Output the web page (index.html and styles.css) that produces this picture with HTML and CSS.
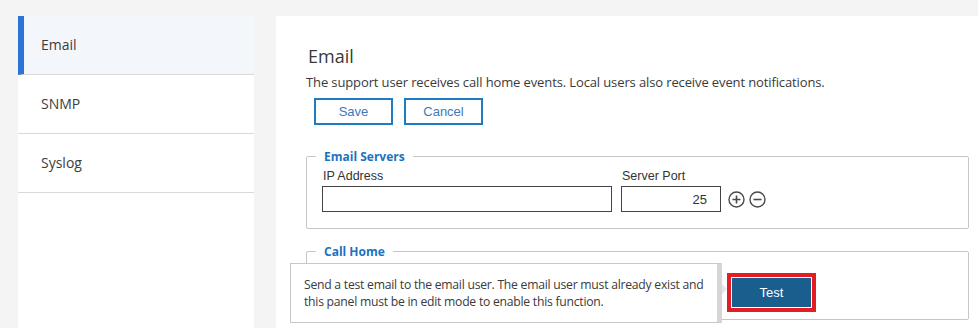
FILE: index.html
```html
<!DOCTYPE html>
<html lang="en">
<head>
  <meta charset="UTF-8">
  <title>Notifications - Email</title>
  <link rel="stylesheet" href="styles.css">
</head>
<body>
  <div class="page">
    <ul class="sidebar">
      <li class="nav-item active">Email</li>
      <li class="nav-item">SNMP</li>
      <li class="nav-item">Syslog</li>
    </ul>

    <div class="main">
      <h2>Email</h2>
      <p class="desc">The support user receives call home events. Local users also receive event notifications.</p>
      <div class="actions">
        <button class="btn-outline">Save</button>
        <button class="btn-outline">Cancel</button>
      </div>

      <fieldset class="group servers">
        <legend>Email Servers</legend>
        <div class="server-row">
          <label class="field ip">
            <span>IP Address</span>
            <input type="text" value="">
          </label>
          <label class="field port">
            <span>Server Port</span>
            <input type="text" value="25">
          </label>
          <div class="row-icons">
            <svg width="17" height="17" viewBox="0 0 17 17">
              <circle cx="8.5" cy="8.5" r="7.5" fill="none" stroke="#4a4a4a" stroke-width="1.4"/>
              <path d="M8.5 4.5v8M4.5 8.5h8" stroke="#4a4a4a" stroke-width="1.6"/>
            </svg>
            <svg width="17" height="17" viewBox="0 0 17 17">
              <circle cx="8.5" cy="8.5" r="7.5" fill="none" stroke="#4a4a4a" stroke-width="1.4"/>
              <path d="M4.5 8.5h8" stroke="#4a4a4a" stroke-width="1.6"/>
            </svg>
          </div>
        </div>
      </fieldset>

      <fieldset class="group call-home">
        <legend>Call Home</legend>
        <div class="call-row">
          <div class="test-wrap">
            <div class="tooltip">Send a test email to the email user. The email user must already exist and this panel must be in edit mode to enable this function.</div>
            <button class="btn-test">Test</button>
          </div>
        </div>
      </fieldset>
    </div>
  </div>
</body>
</html>
```

FILE: styles.css
```css
body {
  margin: 0;
  background-color: #f4f4f4;
  font-family: "Open Sans", "Noto Sans", sans-serif;
  color: #333;
  height: 328px;
  overflow: hidden;
}
.page {
  display: flex;
  gap: 22px;
  padding: 16px 0 0 18px;
  height: 312px;
}

/* left nav */
.sidebar {
  list-style: none;
  margin: 0;
  padding: 0;
  width: 236px;
  flex: none;
  background: white;
}
.nav-item {
  height: 58px;
  line-height: 58px;
  padding-left: 23px;
  font-size: 14px;
  color: #3d3d3d;
  border-bottom: 1px solid #d9d9d9;
}
.nav-item.active {
  background: #f3f6fb;
  border-left: 6px solid #2c73d8;
  padding-left: 17px;
}

/* main panel */
.main {
  flex: 1;
  background: white;
  padding: 28px 9px 0 30px;
}
h2 {
  margin: 0 0 0 2px;
  font-size: 18px;
  font-weight: 400;
  line-height: 24px;
  color: #3a3a3a;
}
.desc {
  margin: 5px 0 0;
  font-size: 13px;
  letter-spacing: -0.12px;
  line-height: 18px;
  color: #3a3a3a;
}
.actions {
  display: flex;
  gap: 11px;
  margin: 7px 0 0 8px;
}
.btn-outline {
  width: 79px;
  height: 27px;
  background: white;
  border: 2px solid #1f7bc2;
  font-family: "Liberation Sans", Arial, sans-serif;
  font-size: 13px;
  color: #3f78b8;
  padding: 0;
}

.group {
  margin: 0;
  border: 1px solid #c6c6c6;
  border-radius: 2px;
  padding: 0 15px;
}
.group legend {
  padding: 0 8px;
  margin-left: -6px;
  font-size: 12px;
  font-weight: 700;
  color: #1d72bd;
}
.servers {
  margin-top: 23px;
  height: 75px;
  padding-top: 4px;
}
.server-row {
  display: flex;
  align-items: flex-end;
  gap: 9px;
}
.field {
  display: flex;
  flex-direction: column;
  gap: 3px;
  font-family: "Liberation Sans", Arial, sans-serif;
  font-size: 12.5px;
  color: #333;
}
.field span {
  padding-left: 1px;
}
.field input {
  box-sizing: border-box;
  height: 26px;
  border: 1px solid #444;
  font-family: "Liberation Sans", Arial, sans-serif;
  font-size: 13px;
  color: #333;
  margin: 0;
}
.ip input { width: 290px; }
.port input {
  width: 100px;
  text-align: right;
  padding-right: 13px;
}
.row-icons {
  display: flex;
  gap: 4px;
  margin-left: -2px;
  padding: 0 0 4px 0;
}
.row-icons svg { display: block; }

.call-home {
  margin-top: 14px;
  height: 75px;
}
.call-row {
  padding: 13px 0 0 405px;
}
.test-wrap {
  position: relative;
  display: inline-block;
}
.btn-test {
  display: block;
  width: 89px;
  height: 39px;
  padding: 0;
  border: 4px solid #e51c24;
  outline: 1px solid white;
  outline-offset: -5px;
  background: #1a5e8e;
  color: white;
  font-family: "Liberation Sans", Arial, sans-serif;
  font-size: 13px;
}
.tooltip {
  position: absolute;
  right: calc(100% + 5px);
  top: -10px;
  width: 413px;
  height: 58px;
  padding: 0 0 0 13px;
  display: flex;
  align-items: center;
  background: white;
  border: 1px solid #c8c8c8;
  border-right: 5px solid #d6d6d6;
  font-size: 12.2px;
  letter-spacing: -0.25px;
  line-height: 17px;
  color: #3a3a3a;
}
.tooltip::after {
  content: "";
  position: absolute;
  left: 100%;
  margin-left: 5px;
  top: 20px;
  border: 5px solid transparent;
  border-left-color: #e6e6e6;
}
```
